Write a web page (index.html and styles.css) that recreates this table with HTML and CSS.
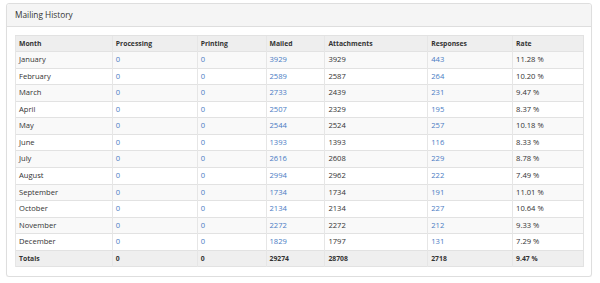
FILE: index.html
```html
<!DOCTYPE html>
<html>
<head>
<meta charset="utf-8">
<link rel="stylesheet" href="styles.css">
</head>
<body>
<div class="panel">
  <div class="panel-heading">Mailing History</div>
  <div class="panel-body">
    <table class="history">
      <colgroup>
        <col class="c1"><col class="c2"><col class="c3"><col class="c4"><col class="c5"><col class="c6"><col class="c7">
      </colgroup>
      <thead>
        <tr><th>Month</th><th>Processing</th><th>Printing</th><th>Mailed</th><th>Attachments</th><th>Responses</th><th>Rate</th></tr>
      </thead>
      <tbody>
        <tr><td>January</td><td><a>0</a></td><td><a>0</a></td><td><a>3929</a></td><td>3929</td><td><a>443</a></td><td>11.28 %</td></tr>
        <tr><td>February</td><td><a>0</a></td><td><a>0</a></td><td><a>2589</a></td><td>2587</td><td><a>264</a></td><td>10.20 %</td></tr>
        <tr><td>March</td><td><a>0</a></td><td><a>0</a></td><td><a>2733</a></td><td>2439</td><td><a>231</a></td><td>9.47 %</td></tr>
        <tr><td>April</td><td><a>0</a></td><td><a>0</a></td><td><a>2507</a></td><td>2329</td><td><a>195</a></td><td>8.37 %</td></tr>
        <tr><td>May</td><td><a>0</a></td><td><a>0</a></td><td><a>2544</a></td><td>2524</td><td><a>257</a></td><td>10.18 %</td></tr>
        <tr><td>June</td><td><a>0</a></td><td><a>0</a></td><td><a>1393</a></td><td>1393</td><td><a>116</a></td><td>8.33 %</td></tr>
        <tr><td>July</td><td><a>0</a></td><td><a>0</a></td><td><a>2616</a></td><td>2608</td><td><a>229</a></td><td>8.78 %</td></tr>
        <tr><td>August</td><td><a>0</a></td><td><a>0</a></td><td><a>2994</a></td><td>2962</td><td><a>222</a></td><td>7.49 %</td></tr>
        <tr><td>September</td><td><a>0</a></td><td><a>0</a></td><td><a>1734</a></td><td>1734</td><td><a>191</a></td><td>11.01 %</td></tr>
        <tr><td>October</td><td><a>0</a></td><td><a>0</a></td><td><a>2134</a></td><td>2134</td><td><a>227</a></td><td>10.64 %</td></tr>
        <tr><td>November</td><td><a>0</a></td><td><a>0</a></td><td><a>2272</a></td><td>2272</td><td><a>212</a></td><td>9.33 %</td></tr>
        <tr><td>December</td><td><a>0</a></td><td><a>0</a></td><td><a>1829</a></td><td>1797</td><td><a>131</a></td><td>7.29 %</td></tr>
      </tbody>
      <tfoot>
        <tr><td>Totals</td><td>0</td><td>0</td><td>29274</td><td>28708</td><td>2718</td><td>9.47 %</td></tr>
      </tfoot>
    </table>
  </div>
</div>
</body>
</html>
```
FILE: styles.css
```css
html, body {
  margin: 0;
  padding: 0;
  background: #fff;
}
body {
  padding: 3px 8px 0 6px;
  font-family: "Open Sans", "Liberation Sans", sans-serif;
  color: #333;
}
.panel {
  width: 584px;
  border: 1px solid #dedede;
  border-radius: 3px;
  background: #fff;
  box-shadow: 0 1px 1px rgba(0,0,0,0.04);
}
.panel-heading {
  height: 22px;
  line-height: 22px;
  padding-left: 8px;
  background: #f5f5f5;
  border-bottom: 1px solid #dedede;
  font-size: 8.3px;
  border-radius: 3px 3px 0 0;
}
.panel-body {
  padding: 8px 8px 9px 8px;
}
.history {
  width: 569px;
  border-collapse: collapse;
  font-size: 7.6px;
  border: 1px solid #e2e2e2;
}
.c1 { width: 97px; }
.c2 { width: 85px; }
.c3 { width: 69px; }
.c4 { width: 59px; }
.c5 { width: 103px; }
.c6 { width: 85px; }
.c7 { width: 71px; }
.history th, .history td {
  text-align: left;
  padding: 2px 3px;
  line-height: 11.57px;
  border-top: 1px solid #e2e2e2;
  border-left: 1px solid #e6e6e6;
  white-space: nowrap;
}
.history th {
  font-size: 6.8px;
  font-weight: 700;
  background: #eeeeee;
  line-height: 11px;
}
.history tbody tr:nth-child(odd) td {
  background: #f9f9f9;
}
.history tfoot td {
  background: #efefef;
  font-weight: 700;
  font-size: 6.8px;
}
.history a {
  color: #4a7cc4;
  text-decoration: none;
}
```
